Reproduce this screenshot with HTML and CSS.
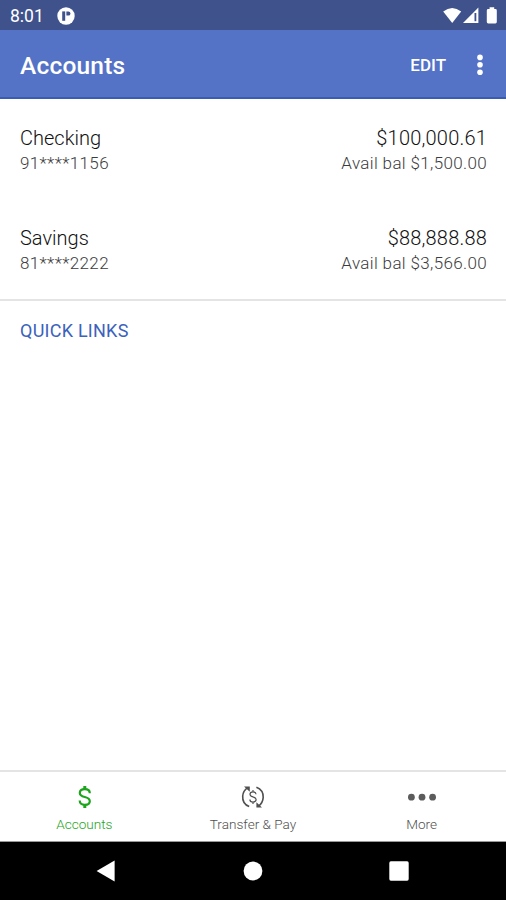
FILE: index.html
```html
<!DOCTYPE html>
<html lang="en">
<head>
    <meta charset="UTF-8">
    <meta name="viewport" content="width=device-width, initial-scale=1.0">
    <title>Accounts</title>
    <link rel="stylesheet" href="styles.css">
</head>
<body>
    <div class="status-bar">
        <span class="time">8:01</span>
        <svg class="app-badge" width="18" height="18" viewBox="0 0 18 18">
            <circle cx="9" cy="9" r="8.7" fill="#fff"/>
            <path d="M5.2 4.4H8.2V13.8H5.2Z" fill="#3f528c"/>
            <path d="M9.4 4.4H11.4Q13.4 4.4 13.4 6.4Q13.4 8.6 11.4 8.6H9.4Z" fill="#3f528c"/>
        </svg>
        <svg class="status-icons" width="56" height="18" viewBox="0 0 56 18">
            <path d="M0.2 4.6Q9.2 -2.4 18.2 4.6L9.2 16Z" fill="#fff"/>
            <path d="M20 16L35.4 0.4V16Z" fill="#fff"/>
            <path d="M32.4 6V14.2" stroke="#3f528c" stroke-width="1.8"/>
            <path d="M46.6 0.2H51.2V2H52.4Q53.8 2 53.8 3.4V15Q53.8 16.4 52.4 16.4H45.2Q43.8 16.4 43.8 15V3.4Q43.8 2 45.2 2H46.6Z" fill="#fff"/>
        </svg>
    </div>
    <header>
        <h1>Accounts</h1>
        <button class="edit">EDIT</button>
        <button class="menu" aria-label="Menu">
            <svg width="6" height="22" viewBox="0 0 6 22">
                <circle cx="3" cy="3.4" r="2.8" fill="#fff"/>
                <circle cx="3" cy="10.8" r="2.8" fill="#fff"/>
                <circle cx="3" cy="18.2" r="2.8" fill="#fff"/>
            </svg>
        </button>
    </header>
    <main>
        <div class="account">
            <div>
                <div class="name">Checking</div>
                <div class="number">91****1156</div>
            </div>
            <div class="amounts">
                <div class="balance">$100,000.61</div>
                <div class="available">Avail bal $1,500.00</div>
            </div>
        </div>
        <div class="account">
            <div>
                <div class="name">Savings</div>
                <div class="number">81****2222</div>
            </div>
            <div class="amounts">
                <div class="balance">$88,888.88</div>
                <div class="available">Avail bal $3,566.00</div>
            </div>
        </div>
        <h2>QUICK LINKS</h2>
    </main>
    <nav class="tabs">
        <a class="tab active">
            <svg width="28" height="28" viewBox="0 0 28 28" fill="none" stroke="#1ca51c" stroke-width="2.2">
                <path d="M19.8 10.2C19.8 7.6 17.8 6.2 14.8 6.2C11.8 6.2 9.8 7.6 9.8 9.9C9.8 12.4 12 13.2 14.8 14C17.8 14.8 19.8 15.7 19.8 18.3C19.8 20.6 17.8 21.9 14.8 21.9C11.6 21.9 9.7 20.3 9.7 17.6"/>
                <path d="M14.8 3V6.2M14.8 22V25" stroke-width="3"/>
            </svg>
            <span>Accounts</span>
        </a>
        <a class="tab transfer">
            <svg width="28" height="28" viewBox="0 0 28 28" fill="none" stroke="#505050" stroke-width="1.6">
                <path d="M10.2 23.6C5.6 21.8 3.4 17.4 3.7 13C4 9.4 5.8 6.5 8.8 4.6"/>
                <path d="M17.4 4.2C22 6 24.4 10 24.2 14.4C24 18.2 22.4 21.2 19.2 23.4"/>
                <path d="M5 3.4H10.8V8.8ZM23 24.6H17.4V19.2Z" fill="#505050" stroke="none"/>
                <path d="M17 11.2C16.9 9.7 15.7 8.9 14 8.9C12.2 8.9 11 9.8 11 11.2C11 12.8 12.4 13.4 14 13.9C15.8 14.4 17.1 15.1 17.1 16.6C17.1 18.1 15.8 19 14 19C12.1 19 10.9 18 10.9 16.4M14 7V8.9M14 19V20.9" stroke-width="1.2"/>
            </svg>
            <span>Transfer &amp; Pay</span>
        </a>
        <a class="tab more">
            <svg width="30" height="28" viewBox="0 0 30 28" fill="#5c5c5c">
                <circle cx="4.4" cy="14.2" r="3.4"/>
                <circle cx="15" cy="14.2" r="3.4"/>
                <circle cx="25.6" cy="14.2" r="3.4"/>
            </svg>
            <span>More</span>
        </a>
    </nav>
    <div class="system-nav">
        <svg width="20" height="24" viewBox="0 0 20 24"><path d="M0.6 12L18.6 1.6V22.4Z" fill="#fff"/></svg>
        <svg width="20" height="20" viewBox="0 0 20 20"><circle cx="10" cy="10" r="9.4" fill="#fff"/></svg>
        <svg width="20" height="20" viewBox="0 0 20 20"><rect x="0.3" y="0.3" width="19.4" height="19.4" rx="1.6" fill="#fff"/></svg>
    </div>
</body>
</html>
```
FILE: styles.css
```css
* {
    box-sizing: border-box;
}
body {
    display: flex;
    flex-direction: column;
    height: 900px;
    margin: 0;
    overflow: hidden;
    background-color: #fff;
    font-family: Roboto, sans-serif;
    color: #111;
}
.status-bar {
    display: flex;
    align-items: center;
    height: 30px;
    padding: 1px 7px 0 10px;
    background-color: #3f528c;
    color: white;
}
.time {
    width: 47px;
    font-size: 17.5px;
}
.status-icons {
    margin-left: auto;
}
header {
    display: flex;
    align-items: center;
    height: 69px;
    padding: 2px 23px 0 20px;
    background-color: #5472c6;
    border-bottom: 2px solid #3c5cb2;
    color: white;
}
h1 {
    flex: 1;
    margin: 2px 0 0;
    font-size: 24.5px;
    font-weight: 500;
    letter-spacing: 0.2px;
}
button {
    padding: 0;
    border: none;
    background: none;
    color: white;
    font-family: inherit;
}
.edit {
    margin-right: 31px;
    font-size: 17px;
    font-weight: 500;
}
.menu {
    display: flex;
}
main {
    flex: 1;
}
.account {
    display: flex;
    justify-content: space-between;
    height: 100px;
    padding: 27px 19px 0 20px;
    font-weight: 300;
}
.account + .account {
    height: 102px;
    border-bottom: 2px solid #e4e4e4;
}
.name, .balance {
    font-size: 20px;
    line-height: 25px;
}
.balance {
    letter-spacing: 0.2px;
}
.number, .available {
    font-size: 17px;
    line-height: 25px;
    letter-spacing: 0.35px;
    color: #3c3c3c;
}
.amounts {
    text-align: right;
}
h2 {
    margin: 0;
    padding: 17px 20px;
    font-size: 18px;
    font-weight: 400;
    line-height: 26px;
    letter-spacing: 0.25px;
    color: #3b62bd;
}
.tabs {
    display: flex;
    height: 72px;
    border-top: 2px solid #e4e4e4;
    border-bottom: 1px solid #999;
}
.tab {
    display: flex;
    flex: 1;
    flex-direction: column;
    align-items: center;
    padding-top: 11px;
    font-size: 13.6px;
    font-weight: 300;
    line-height: 26px;
    color: #505050;
}
.tab.active {
    color: #1ca51c;
}
.system-nav {
    display: flex;
    align-items: center;
    justify-content: space-between;
    height: 58px;
    padding: 0 97px 0 96px;
    background-color: #000;
}
```
